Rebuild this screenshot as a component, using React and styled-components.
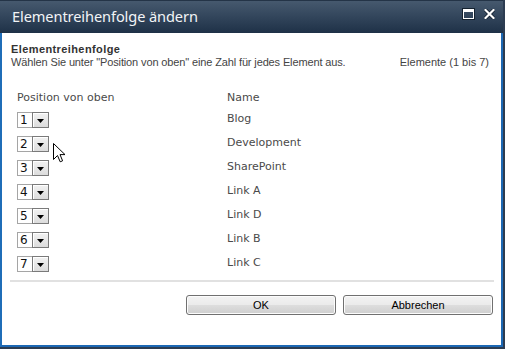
import React from 'react';
import styled, { createGlobalStyle } from 'styled-components';

const GlobalStyle = createGlobalStyle`
  html, body {
    margin: 0;
    padding: 0;
    background: #2c3c51;
    width: 505px;
    height: 349px;
    overflow: hidden;
  }
`;

const items = ['Blog', 'Development', 'SharePoint', 'Link A', 'Link D', 'Link B', 'Link C'];

const App = () => {
  return (
    <>
      <GlobalStyle />
      <Window>
        <TitleBar>
          <Title>Elementreihenfolge ändern</Title>
          <TitleIcons>
            <MaxIcon />
            <svg width="11" height="10" viewBox="0 0 11 10">
              <path d="M1.5 1 L9.5 9 M9.5 1 L1.5 9" stroke="#0d1a29" strokeWidth="3.6" strokeLinecap="square" />
              <path d="M1.5 1 L9.5 9 M9.5 1 L1.5 9" stroke="#ffffff" strokeWidth="2.2" strokeLinecap="square" />
            </svg>
          </TitleIcons>
        </TitleBar>
        <Body>
          <Header>
            <div>
              <Heading>Elementreihenfolge</Heading>
              <Desc>Wählen Sie unter "Position von oben" eine Zahl für jedes Element aus.</Desc>
            </div>
            <Count>Elemente (1 bis 7)</Count>
          </Header>
          <Table>
            <ColHead>Position von oben</ColHead>
            <ColHead>Name</ColHead>
            {items.map((name, i) => (
              <React.Fragment key={name}>
                <Cell>
                  <Select>
                    <SelValue>{i + 1}</SelValue>
                    <SelArrow>
                      <svg width="7" height="4" viewBox="0 0 7 4">
                        <path d="M0 0 H7 L3.5 4 Z" fill="#000" />
                      </svg>
                    </SelArrow>
                  </Select>
                </Cell>
                <NameCell>{name}</NameCell>
              </React.Fragment>
            ))}
          </Table>
          <Separator />
          <Buttons>
            <Button>OK</Button>
            <Button>Abbrechen</Button>
          </Buttons>
        </Body>
        <Cursor width="13" height="21" viewBox="0 0 13 21">
          <path d="M0.5 0.5 L0.5 16.5 L4.5 12.5 L7.2 18.8 L9.6 17.8 L7 11.6 L12 11.6 Z" fill="#fff" stroke="#000" strokeWidth="1" strokeLinejoin="miter" />
        </Cursor>
      </Window>
    </>
  );
};

const Window = styled.div`
  position: relative;
  width: 503px;
  height: 347px;
  box-sizing: border-box;
  display: flex;
  flex-direction: column;
  border: 2px solid #1c68b4;
  border-top: none;
  border-left-color: #1f6db8;
  background: #ffffff;
`;

const TitleBar = styled.div`
  height: 33px;
  margin: 0 -2px;
  display: flex;
  align-items: center;
  justify-content: space-between;
  padding: 0 8px 0 12px;
  background: linear-gradient(to bottom, #46596e 0%, #34475d 45%, #1e3147 100%);
  border-top: 1px solid #243447;
  box-sizing: border-box;
`;

const Title = styled.div`
  font-family: "Noto Sans", "Open Sans", sans-serif;
  font-size: 14.6px;
  color: #f2f4f6;
  margin-top: -2px;
  letter-spacing: -0.1px;
`;

const TitleIcons = styled.div`
  display: flex;
  align-items: center;
  gap: 10px;
  margin-top: -6px;
`;

const MaxIcon = styled.div`
  width: 11px;
  height: 10px;
  box-sizing: border-box;
  border: 1px solid #fff;
  border-top-width: 3px;
  box-shadow: 0 0 0 1px #15222f;
`;

const Body = styled.div`
  flex: 1;
  display: flex;
  flex-direction: column;
  padding: 10px 7px 0 8px;
`;

const Header = styled.div`
  display: flex;
  justify-content: space-between;
  align-items: flex-end;
  padding: 0 5px 0 1px;
  font-family: "Liberation Sans", Arial, sans-serif;
  font-size: 11px;
  line-height: 13px;
  color: #3b3b3b;
`;

const Heading = styled.div`
  font-weight: bold;
  color: #333;
  letter-spacing: 0.4px;
`;

const Desc = styled.div`
  color: #444;
  letter-spacing: -0.13px;
`;

const Count = styled.div`
  color: #444;
`;

const Table = styled.div`
  display: grid;
  grid-template-columns: 210px 1fr;
  grid-auto-rows: 24px;
  grid-template-rows: 17px;
  padding: 22px 0 0 7px;
  font-family: "DejaVu Sans", Verdana, sans-serif;
  font-size: 11px;
  color: #4a4a4a;
`;

const ColHead = styled.div`
  line-height: 13px;
`;

const Cell = styled.div`
  padding-top: 4px;
`;

const NameCell = styled.div`
  padding-top: 4px;
  line-height: 14px;
`;

const Select = styled.div`
  display: flex;
  width: 32px;
  height: 16px;
  box-sizing: border-box;
  border: 1px solid #a5a5a5;
  background: #fff;
`;

const SelValue = styled.div`
  width: 14px;
  font-family: "DejaVu Sans", Verdana, sans-serif;
  font-size: 12px;
  line-height: 14px;
  color: #111;
  padding-left: 2px;
  box-sizing: border-box;
`;

const SelArrow = styled.div`
  flex: 1;
  display: flex;
  align-items: center;
  justify-content: center;
  padding-top: 2px;
  box-sizing: border-box;
  border: 1px solid #7a7a7a;
  margin: -1px -1px -1px 0;
  background: linear-gradient(to bottom, #f2f2f2, #dcdcdc);
  box-shadow: inset 1px 1px 0 #fff;
`;

const Separator = styled.div`
  height: 2px;
  margin-top: 4px;
  background: #e1e1e1;
`;

const Buttons = styled.div`
  display: flex;
  justify-content: flex-end;
  gap: 7px;
  padding: 13px 1px 0 0;
`;

const Button = styled.div`
  width: 150px;
  height: 20px;
  box-sizing: border-box;
  border: 1px solid #707070;
  border-radius: 3px;
  background: linear-gradient(to bottom, #f3f3f3 0%, #ebebeb 48%, #dddddd 52%, #cfcfcf 100%);
  box-shadow: inset 0 0 0 1px #fcfcfc;
  display: flex;
  align-items: center;
  justify-content: center;
  font-family: "Liberation Sans", Arial, sans-serif;
  font-size: 11px;
  color: #000;
`;

const Cursor = styled.svg`
  position: absolute;
  left: 51px;
  top: 143px;
`;

export default App;
